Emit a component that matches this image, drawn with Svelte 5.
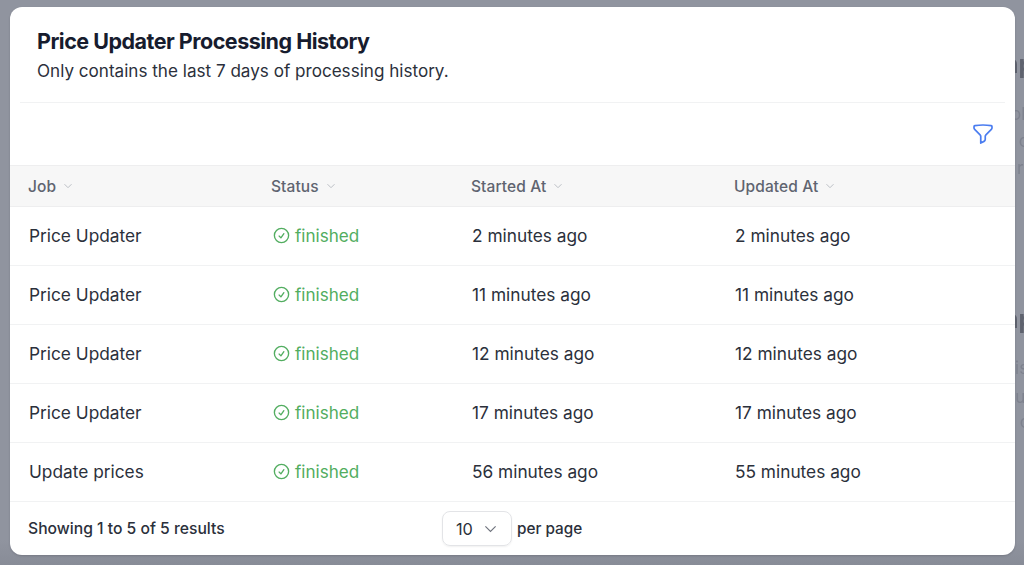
<script>
  const rows = [
    ['Price Updater', '2 minutes ago', '2 minutes ago'],
    ['Price Updater', '11 minutes ago', '11 minutes ago'],
    ['Price Updater', '12 minutes ago', '12 minutes ago'],
    ['Price Updater', '17 minutes ago', '17 minutes ago'],
    ['Update prices', '56 minutes ago', '55 minutes ago']
  ];
  const heads = ['Job', 'Status', 'Started At', 'Updated At'];
</script>

<div class="page">
  <div class="behind" aria-hidden="true">
    <span class="big b1">np</span><span class="b2">ol</span><span class="b3">e c</span><span class="b4">r</span>
    <span class="big b5">np</span><span class="b6">his</span><span class="b7">r u</span><span class="b8">e c</span>
  </div>
  <div class="modal">
    <header class="head">
      <h2>Price Updater Processing History</h2>
      <p>Only contains the last 7 days of processing history.</p>
    </header>
    <div class="toolbar">
      <svg class="funnel" viewBox="0 0 24 24" fill="none" stroke="currentColor" stroke-width="1.700" stroke-linejoin="round" stroke-linecap="round"><path d="M12 3c2.755 0 5.455.232 8.083.678.533.09.917.556.917 1.096v1.044a2.250 2.250 0 0 1-.659 1.591l-5.432 5.432a2.250 2.250 0 0 0-.659 1.591v2.927a2.250 2.250 0 0 1-1.244 2.013L9.750 21v-6.568a2.250 2.250 0 0 0-.659-1.591L3.659 7.409A2.250 2.250 0 0 1 3 5.818V4.774c0-.54.384-1.006.917-1.096A48.320 48.320 0 0 1 12 3Z"/></svg>
    </div>
    <div class="thead">
      {#each heads as h}
        <div class="th">{h}<svg viewBox="0 0 10 6" fill="none" stroke="currentColor" stroke-width="1"><path d="M1.500 1.200 5 4.700l3.500-3.500"/></svg></div>
      {/each}
    </div>
    {#each rows as r}
      <div class="row">
        <div class="td">{r[0]}</div>
        <div class="status">
          <svg viewBox="0 0 24 24" fill="none" stroke="currentColor" stroke-width="1.700" stroke-linecap="round" stroke-linejoin="round"><path d="M9 12.750 11.250 15 15 9.750M21 12a9 9 0 1 1-18 0 9 9 0 0 1 18 0Z"/></svg>
          finished
        </div>
        <div class="td">{r[1]}</div>
        <div class="td">{r[2]}</div>
      </div>
    {/each}
    <footer class="foot">
      <div class="showing">Showing 1 to 5 of 5 results</div>
      <div class="perpage">
        <div class="select">10<svg viewBox="0 0 14 8" fill="none" stroke="currentColor" stroke-width="1.300"><path d="M1.500 1.200 7 6.500l5.500-5.300"/></svg></div>
        <span>per page</span>
      </div>
    </footer>
  </div>
</div>

<style>
  :global(body) { margin: 0; background: #8f939e; }
  .page {
    position: relative;
    width: 1024px;
    height: 565px;
    overflow: hidden;
    background: linear-gradient(#90949f, #90949f 540px, #888c97);
    padding: 7px 9px 10px 10px;
    box-sizing: border-box;
    font-family: Inter, "Liberation Sans", sans-serif;
    color: #1f2430;
  }
  .behind { position: absolute; inset: 0; font-size: 17px; color: #7e828e; filter: blur(0.6px); }
  .behind span { position: absolute; line-height: 1; white-space: nowrap; }
  .big { font-size: 25px; font-weight: 700; color: #5f636f !important; }
  .b1 { top: 52px; left: 1003px; }
  .b5 { top: 307px; left: 1003px; }
  .b2 { top: 106px; left: 1011px; }
  .b3 { top: 133px; left: 1004px; }
  .b4 { top: 160px; left: 1017px; }
  .b6 { top: 360px; left: 1005px; }
  .b7 { top: 389px; left: 1004px; }
  .b8 { top: 414px; left: 1005px; }

  .modal {
    position: relative;
    background: #fff;
    border-radius: 12px;
    height: 548px;
    overflow: hidden;
    display: flex;
    flex-direction: column;
    box-shadow: 0 1px 2px rgba(60,60,70,.25);
  }
  .head {
    margin: 0 10px;
    padding: 20px 17px 0;
    height: 96px;
    box-sizing: border-box;
    border-bottom: 1px solid #f1f2f3;
  }
  h2 {
    margin: 0;
    font-size: 21.500px;
    line-height: 28px;
    font-weight: 700;
    letter-spacing: -0.5px;
    color: #171c2e;
  }
  .head p {
    margin: 3px 0 0;
    font-size: 17.100px;
    line-height: 26px;
    color: #2b303b;
  }
  .toolbar {
    height: 62px;
    display: flex;
    justify-content: flex-end;
    align-items: center;
    padding-right: 20px;
    box-sizing: border-box;
  }
  .funnel { width: 24px; height: 24px; color: #4b7df0; }
  .thead {
    display: grid;
    grid-template-columns: 243px 200px 263px 1fr;
    height: 42px;
    box-sizing: border-box;
    padding: 0 0 0 18px;
    align-items: center;
    background: #f7f7f7;
    border-top: 1px solid #eeeeef;
    border-bottom: 1px solid #eeeeef;
  }
  .th {
    display: flex;
    align-items: center;
    gap: 7px;
    font-size: 15.500px;
    font-weight: 500;
    letter-spacing: 0.1px;
    color: #5f6470;
  }
  .th svg { width: 10px; height: 6px; color: #bcbfc5; }
  .row {
    display: grid;
    grid-template-columns: 244px 199px 263px 1fr;
    height: 59px;
    box-sizing: border-box;
    padding: 0 0 0 19px;
    align-items: center;
    border-bottom: 1px solid #f1f2f3;
  }
  .td { font-size: 17.300px; color: #2b303b; margin-top: -1px; }
  .status {
    display: flex;
    align-items: center;
    gap: 4px;
    font-size: 17.100px;
    color: #52ad60;
    margin-top: -1px;
    line-height: 24px;
  }
  .status svg { width: 19px; height: 19px; margin-left: -1px; margin-top: -1px; }
  .foot {
    flex: 1;
    display: grid;
    grid-template-columns: 414px 1fr;
    padding: 0 0 0 18px;
    align-items: center;
  }
  .showing { font-size: 15.700px; font-weight: 500; color: #2b303b; margin-top: -1px; }
  .perpage span { font-size: 15.300px; font-weight: 500; color: #2b303b; margin-top: -1px; }
  .perpage { display: flex; align-items: center; gap: 5px; }
  .select {
    width: 70px;
    height: 35px;
    box-sizing: border-box;
    border: 1px solid #e3e4e7;
    border-radius: 8px;
    box-shadow: 0 1px 2px rgba(0,0,0,.06);
    display: flex;
    align-items: center;
    justify-content: space-between;
    padding: 0 14px 0 13px;
    font-size: 16.300px;
    color: #2b303b;
  }
  .select svg { width: 13px; height: 8px; color: #70747e; }
</style>
